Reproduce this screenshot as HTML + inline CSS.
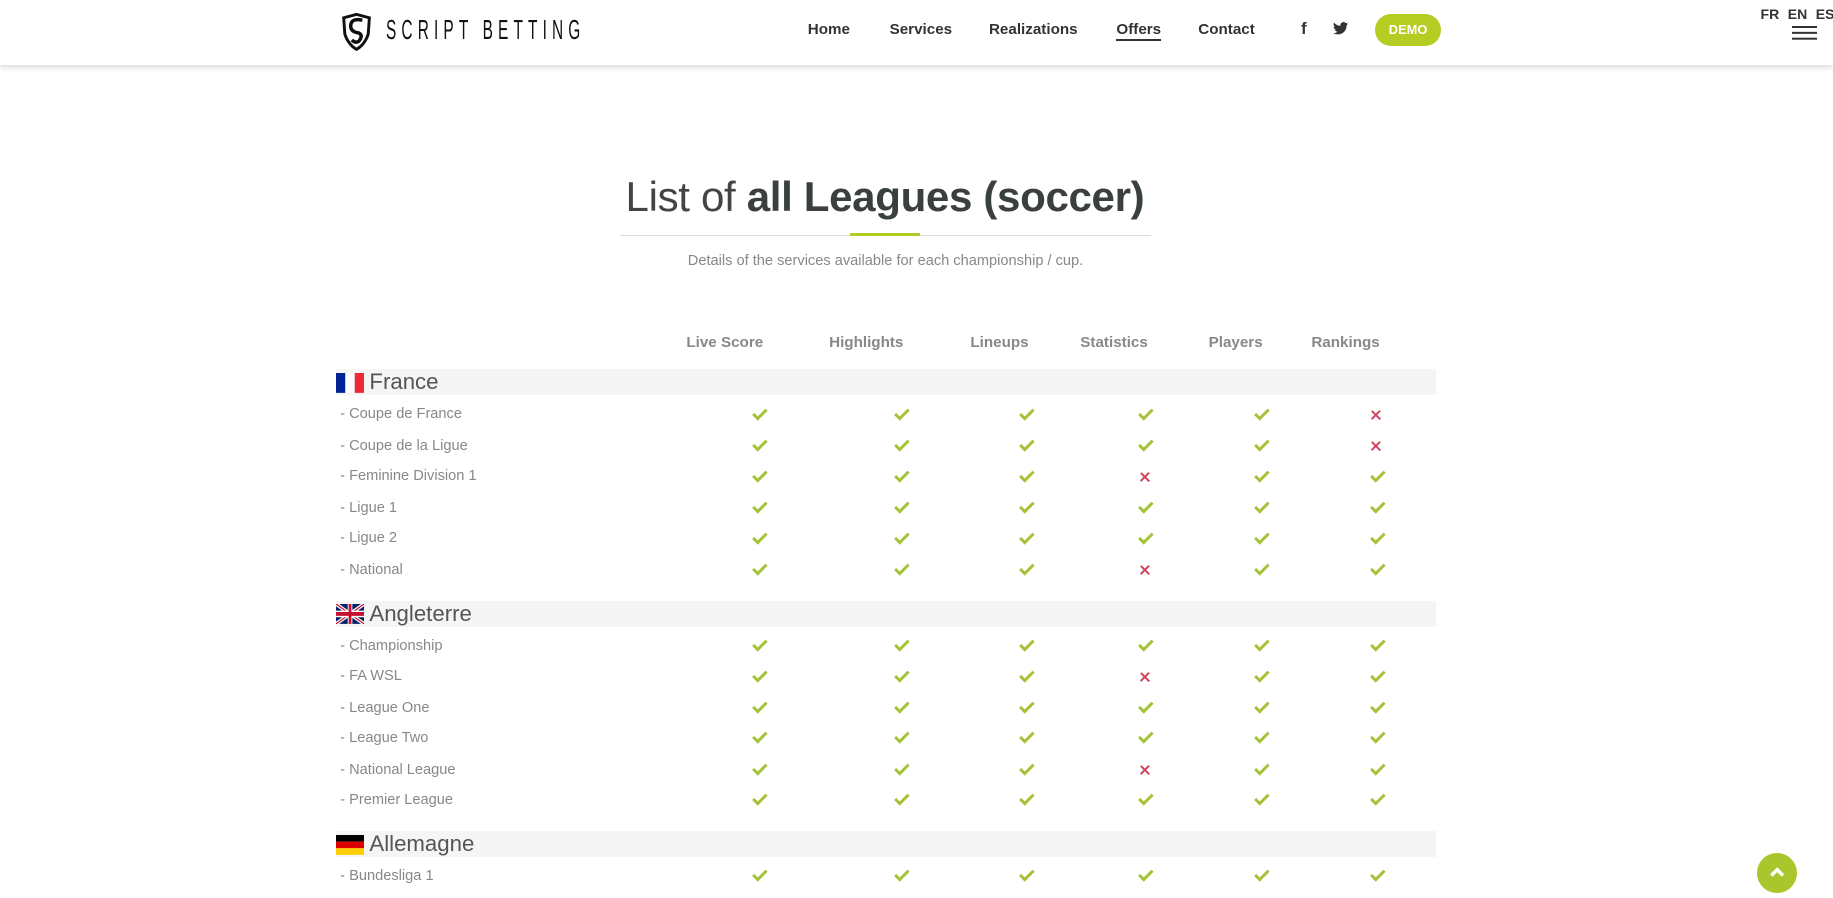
<!DOCTYPE html>
<html><head><meta charset="utf-8">
<style>
html,body{margin:0;padding:0;background:#fff;width:1833px;height:898px;overflow:hidden}
#w{zoom:1.16901;width:1568px;height:768px;position:relative;font-family:"Liberation Sans",sans-serif}
.a{position:absolute;white-space:nowrap}
#hdr{position:absolute;left:0;top:0;width:1568px;height:56px;background:#fff;box-shadow:0 2px 5px rgba(0,0,0,.15)}
.nav{top:18px;font-size:13px;font-weight:bold;color:#333}
.th{top:286px;font-size:13px;font-weight:bold;color:#888;transform:translateX(-50%)}
.cty{left:287px;width:941px;height:22px;background:#f5f5f5}
.cty span{position:absolute;left:29px;top:0;font-size:19px;line-height:22px;color:#555}
.flag{position:absolute;left:0;top:3px;width:24px;height:17px}
.r{left:291px;width:940px;height:20px;line-height:20px;font-size:12.5px;color:#888}
.r b{position:absolute;top:4px;width:12px;height:12px}
.r b:nth-of-type(1){left:352px}.r b:nth-of-type(2){left:473px}.r b:nth-of-type(3){left:580px}
.r b:nth-of-type(4){left:682px}.r b:nth-of-type(5){left:781px}.r b:nth-of-type(6){left:880px}
.y::before{content:"";position:absolute;left:4px;top:-2px;width:4.5px;height:9px;border-right:3px solid #a5c339;border-bottom:3px solid #a5c339;transform:rotate(45deg)}
.n::before,.n::after{content:"";position:absolute;left:1px;top:5px;width:10px;height:2px;background:#d0455c;transform:rotate(45deg)}
.n::after{transform:rotate(-45deg)}
</style></head><body><div id="w">
<div id="hdr"></div>
<svg class="a" style="left:290px;top:10px" width="30" height="34" viewBox="0 0 30 34"><path d="M4 5 L15 2 L26 5 L25 19 Q22 28 15 32 Q8 28 5 19 Z" fill="none" stroke="#111" stroke-width="2.5"/><path d="M20 7 Q10 5 10 12 Q10 17 17 18 Q21 20 17 25 Q14 27 11 24" fill="none" stroke="#111" stroke-width="3"/></svg>
<div class="a" style="left:330px;top:12px;font-size:24px;letter-spacing:8px;color:#111;transform:scaleX(.55);transform-origin:left">SCRIPT BETTING</div>
<div class="a nav" style="left:691px">Home</div>
<div class="a nav" style="left:761px">Services</div>
<div class="a nav" style="left:846px">Realizations</div>
<div class="a nav" style="left:955px;border-bottom:2px solid #333;padding-bottom:1px">Offers</div>
<div class="a nav" style="left:1025px">Contact</div>
<div class="a" style="left:1113px;top:17px;font-size:14px;font-weight:bold;color:#333">f</div>
<svg class="a" style="left:1140px;top:19px" width="13" height="11" viewBox="0 0 24 20"><path d="M24 2.4a10 10 0 0 1-2.8.8A5 5 0 0 0 23.3.4a10 10 0 0 1-3.1 1.2A4.9 4.9 0 0 0 11.8 6 14 14 0 0 1 1.7.9a4.9 4.9 0 0 0 1.5 6.6A4.9 4.9 0 0 1 1 6.9a4.9 4.9 0 0 0 3.9 4.8 5 5 0 0 1-2.2.1 4.9 4.9 0 0 0 4.6 3.4A9.9 9.9 0 0 1 0 17.3 14 14 0 0 0 7.5 19.5c9 0 14-7.5 14-14v-.6A10 10 0 0 0 24 2.4z" fill="#333"/></svg>
<div class="a" style="left:1176px;top:12px;width:57px;height:27px;border-radius:14px;background:#b5cc22;color:#fff;font-size:11px;font-weight:bold;text-align:center;line-height:27px">DEMO</div>
<div class="a" style="left:1506px;top:5px;font-size:12px;font-weight:bold;color:#333;word-spacing:4px">FR EN ES</div>
<div class="a" style="left:1533px;top:22px;width:21px;height:2px;background:#333;box-shadow:0 5px 0 #333,0 10px 0 #333"></div>

<div class="a" style="left:530px;top:148px;width:454px;text-align:center;font-size:36px;color:#333;letter-spacing:-0.3px"><span style="font-weight:normal;color:#444">List of </span><span style="font-weight:bold;color:#3a3f3f">all Leagues (soccer)</span></div>
<div class="a" style="left:530px;top:201px;width:455px;height:1px;background:#ddd"></div>
<div class="a" style="left:727px;top:199px;width:60px;height:3px;background:#b5cc22"></div>
<div class="a" style="left:530px;top:216px;width:455px;text-align:center;font-size:12.5px;color:#888">Details of the services available for each championship / cup.</div>

<div class="a th" style="left:620px">Live Score</div>
<div class="a th" style="left:741px">Highlights</div>
<div class="a th" style="left:855px">Lineups</div>
<div class="a th" style="left:953px">Statistics</div>
<div class="a th" style="left:1057px">Players</div>
<div class="a th" style="left:1151px">Rankings</div>

<div class="a cty" style="top:316px"><svg class="flag" viewBox="0 0 3 2" preserveAspectRatio="none"><rect width="1" height="2" fill="#002395"/><rect x="1" width="1" height="2" fill="#fff"/><rect x="2" width="1" height="2" fill="#ed2939"/></svg><span>France</span></div>
<div class="a r" style="top:345px">- Coupe de France<b class="y"></b><b class="y"></b><b class="y"></b><b class="y"></b><b class="y"></b><b class="n"></b></div>
<div class="a r" style="top:372px">- Coupe de la Ligue<b class="y"></b><b class="y"></b><b class="y"></b><b class="y"></b><b class="y"></b><b class="n"></b></div>
<div class="a r" style="top:398px">- Feminine Division 1<b class="y"></b><b class="y"></b><b class="y"></b><b class="n"></b><b class="y"></b><b class="y"></b></div>
<div class="a r" style="top:425px">- Ligue 1<b class="y"></b><b class="y"></b><b class="y"></b><b class="y"></b><b class="y"></b><b class="y"></b></div>
<div class="a r" style="top:451px">- Ligue 2<b class="y"></b><b class="y"></b><b class="y"></b><b class="y"></b><b class="y"></b><b class="y"></b></div>
<div class="a r" style="top:478px">- National<b class="y"></b><b class="y"></b><b class="y"></b><b class="n"></b><b class="y"></b><b class="y"></b></div>

<div class="a cty" style="top:514px"><svg class="flag" viewBox="0 0 60 30" preserveAspectRatio="none"><rect width="60" height="30" fill="#012169"/><path d="M0 0L60 30M60 0L0 30" stroke="#fff" stroke-width="6"/><path d="M0 0L60 30M60 0L0 30" stroke="#C8102E" stroke-width="2"/><path d="M30 0V30M0 15H60" stroke="#fff" stroke-width="10"/><path d="M30 0V30M0 15H60" stroke="#C8102E" stroke-width="6"/></svg><span>Angleterre</span></div>
<div class="a r" style="top:543px">- Championship<b class="y"></b><b class="y"></b><b class="y"></b><b class="y"></b><b class="y"></b><b class="y"></b></div>
<div class="a r" style="top:569px">- FA WSL<b class="y"></b><b class="y"></b><b class="y"></b><b class="n"></b><b class="y"></b><b class="y"></b></div>
<div class="a r" style="top:596px">- League One<b class="y"></b><b class="y"></b><b class="y"></b><b class="y"></b><b class="y"></b><b class="y"></b></div>
<div class="a r" style="top:622px">- League Two<b class="y"></b><b class="y"></b><b class="y"></b><b class="y"></b><b class="y"></b><b class="y"></b></div>
<div class="a r" style="top:649px">- National League<b class="y"></b><b class="y"></b><b class="y"></b><b class="n"></b><b class="y"></b><b class="y"></b></div>
<div class="a r" style="top:675px">- Premier League<b class="y"></b><b class="y"></b><b class="y"></b><b class="y"></b><b class="y"></b><b class="y"></b></div>

<div class="a cty" style="top:711px"><svg class="flag" viewBox="0 0 3 3" preserveAspectRatio="none"><rect width="3" height="1" fill="#000"/><rect y="1" width="3" height="1" fill="#dd0000"/><rect y="2" width="3" height="1" fill="#ffce00"/></svg><span>Allemagne</span></div>
<div class="a r" style="top:740px">- Bundesliga 1<b class="y"></b><b class="y"></b><b class="y"></b><b class="y"></b><b class="y"></b><b class="y"></b></div>

<div class="a" style="left:1503px;top:730px;width:34px;height:34px;border-radius:50%;background:#a9c62c"></div>
<svg class="a" style="left:1513px;top:740px" width="14" height="12" viewBox="0 0 14 12"><path d="M2 9L7 4L12 9" fill="none" stroke="#fff" stroke-width="3"/></svg>
</div></body></html>
